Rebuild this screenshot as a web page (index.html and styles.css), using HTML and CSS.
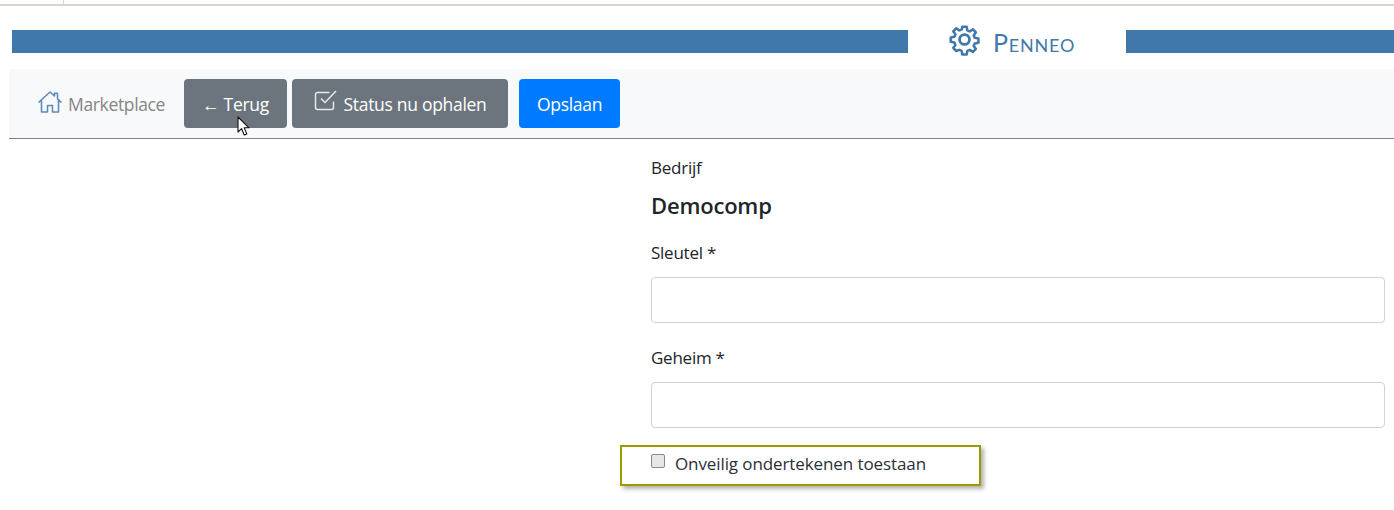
FILE: index.html
```html
<!DOCTYPE html>
<html lang="nl">
<head>
<meta charset="utf-8">
<title>Penneo</title>
<link rel="stylesheet" href="styles.css">
</head>
<body>
<div class="topstrip"><div class="tab"></div></div>
<header class="brand">
  <div class="bar bar-left"></div>
  <div class="logo">
    <svg class="gear" viewBox="0 0 24 24" width="33" height="33" fill="none" stroke="#4178ac" stroke-width="2" stroke-linejoin="round">
      <path d="M10.3 2h3.4l.5 2.9 1.9.8 2.4-1.7 2.4 2.4-1.7 2.4.8 1.9 2.9.5v3.4l-2.9.5-.8 1.9 1.7 2.4-2.4 2.4-2.4-1.7-1.9.8-.5 2.9h-3.4l-.5-2.9-1.9-.8L5.6 21l-2.4-2.4 1.7-2.4-.8-1.9-2.9-.5v-3.4l2.9-.5.8-1.9L3.2 5.6l2.4-2.4L8 4.9l1.9-.8z" transform="translate(12 12) scale(.93) translate(-12 -12)"/>
      <circle cx="12" cy="12" r="3.6"/>
    </svg>
    <span class="logo-text">Penneo</span>
  </div>
  <div class="bar bar-right"></div>
</header>
<nav class="navbar">
  <a class="nav-link">
    <svg class="house" viewBox="0 0 26 24" width="26" height="24" fill="none" stroke="#5b8cc0" stroke-width="1.6" stroke-linejoin="round">
      <path d="M1.5 12.5 13 2l4.5 4V3.2h3v5.6l4 3.7M4.5 10.5V22h6v-6.5h5V22h6V10.5"/>
    </svg>
    <span>Marketplace</span>
  </a>
  <button class="btn btn-grey btn-back" type="button">← Terug</button>
  <button class="btn btn-grey btn-status" type="button">
    <svg class="check" viewBox="0 0 24 24" width="24" height="24" fill="none" stroke="#e6e8ea" stroke-width="1.5" stroke-linejoin="round">
      <path d="M19.5 12.5v6a2 2 0 0 1-2 2h-14a2 2 0 0 1-2-2v-13a2 2 0 0 1 2-2h12"/>
      <path d="M7 9.5l4 4L22 2"/>
    </svg>
    <span>Status nu ophalen</span>
  </button>
  <button class="btn btn-blue" type="button">Opslaan</button>
</nav>
<main class="content">
  <form class="form">
    <div class="label first">Bedrijf</div>
    <div class="company">Democomp</div>
    <label class="label" for="key">Sleutel *</label>
    <input class="input" id="key" type="text">
    <label class="label second" for="secret">Geheim *</label>
    <input class="input" id="secret" type="text">
    <label class="callout">
      <input class="box" type="checkbox">
      <span>Onveilig ondertekenen toestaan</span>
    </label>
  </form>
</main>
<svg class="cursor" viewBox="0 0 14 21" width="14" height="21">
  <path d="M1 1v15l3.6-3.3 2.6 6.3 2.6-1.1-2.6-6.1H12z" fill="#fff" stroke="#111" stroke-width="1.1" stroke-linejoin="round"/>
</svg>
</body>
</html>
```
FILE: styles.css
```css
* { box-sizing: border-box; }
html, body { margin: 0; padding: 0; }
body {
  position: relative;
  width: 1394px;
  height: 510px;
  overflow: hidden;
  background: #fff;
  font-family: "Open Sans", "Noto Sans", "Liberation Sans", sans-serif;
  font-size: 16px;
  color: #212529;
}
.topstrip {
  height: 6px;
  border-bottom: 2px solid #d6d5ce;
  padding-left: 63px;
}
.tab { width: 1px; height: 4px; background: #d6d5ce; }
.brand {
  height: 63px;
  display: flex;
  align-items: flex-start;
  padding: 24px 0 0 12px;
}
.bar { height: 23px; background: #4178ac; }
.bar-left { width: 896px; }
.bar-right { flex: 1; }
.logo {
  width: 218px;
  display: flex;
  align-items: center;
  height: 23px;
  padding-left: 40px;
  color: #4178ac;
}
.gear { flex: none; margin-top: -4px; }
.logo-text {
  margin-left: 12px;
  font-size: 25px;
  font-variant: small-caps;
  font-family: "Lato", "Open Sans", sans-serif;
  font-weight: 400;
  letter-spacing: .8px;
  white-space: nowrap;
}
.navbar {
  margin-left: 9px;
  height: 70px;
  background: #f8f9fa;
  border-bottom: 1px solid #808285;
  display: flex;
  align-items: flex-start;
  padding: 10px 0 0 28px;
}
.nav-link {
  display: flex;
  align-items: center;
  height: 49px;
  width: 147px;
  color: #858585;
  font-size: 17.5px;
  letter-spacing: -.35px;
  white-space: nowrap;
}
.nav-link span { margin-left: 5px; margin-top: 1px; }
.house { flex: none; margin-top: -4px; }
.btn {
  height: 49px;
  border: 0;
  border-radius: 4px;
  color: #fff;
  font: inherit;
  font-size: 17.5px;
  letter-spacing: -.3px;
  padding: 0;
  display: flex;
  align-items: center;
  justify-content: center;
  white-space: nowrap;
}
.btn-grey { background: #6c757d; }
.btn-blue { background: #007bff; width: 101px; margin-left: 11px; }
.btn-back { width: 103px; margin-right: 5px; }
.btn-status { width: 216px; }
.check { flex: none; margin-right: 6px; margin-top: -5px; }
.content { padding-left: 651px; }
.form { width: 734px; display: flex; flex-direction: column; align-items: flex-start; }
.label { font-size: 17px; line-height: 24px; letter-spacing: -.25px; color: #212529; }
.first { margin-top: 17px; }
.company { font-size: 22px; font-weight: 600; line-height: 30px; margin-top: 10px; letter-spacing: -.2px; }
.form > .label:not(.first) { margin-top: 21px; }
.form > .label.second { margin-top: 23px; }
.input {
  width: 734px;
  height: 46px;
  margin-top: 12px;
  border: 1px solid #ced4da;
  border-radius: 4px;
  background: #fff;
}
.callout {
  display: flex;
  align-items: flex-start;
  width: 361px;
  height: 41px;
  margin: 17px 0 0 -31px;
  padding: 5px 0 0 29px;
  border: 2px solid #9b9b00;
  box-shadow: 3px 3px 4px rgba(0, 0, 0, .3);
  font-size: 17px;
  line-height: 24px;
  letter-spacing: -.1px;
  background: #fff;
  color: #2b2f38;
}
.box {
  appearance: none;
  width: 14px;
  height: 14px;
  margin: 2px 10px 0 0;
  border: 1px solid #8a8a8a;
  border-radius: 2px;
  background: #e6e6e6;
  flex: none;
}
.cursor { position: absolute; left: 237px; top: 116px; }
```
